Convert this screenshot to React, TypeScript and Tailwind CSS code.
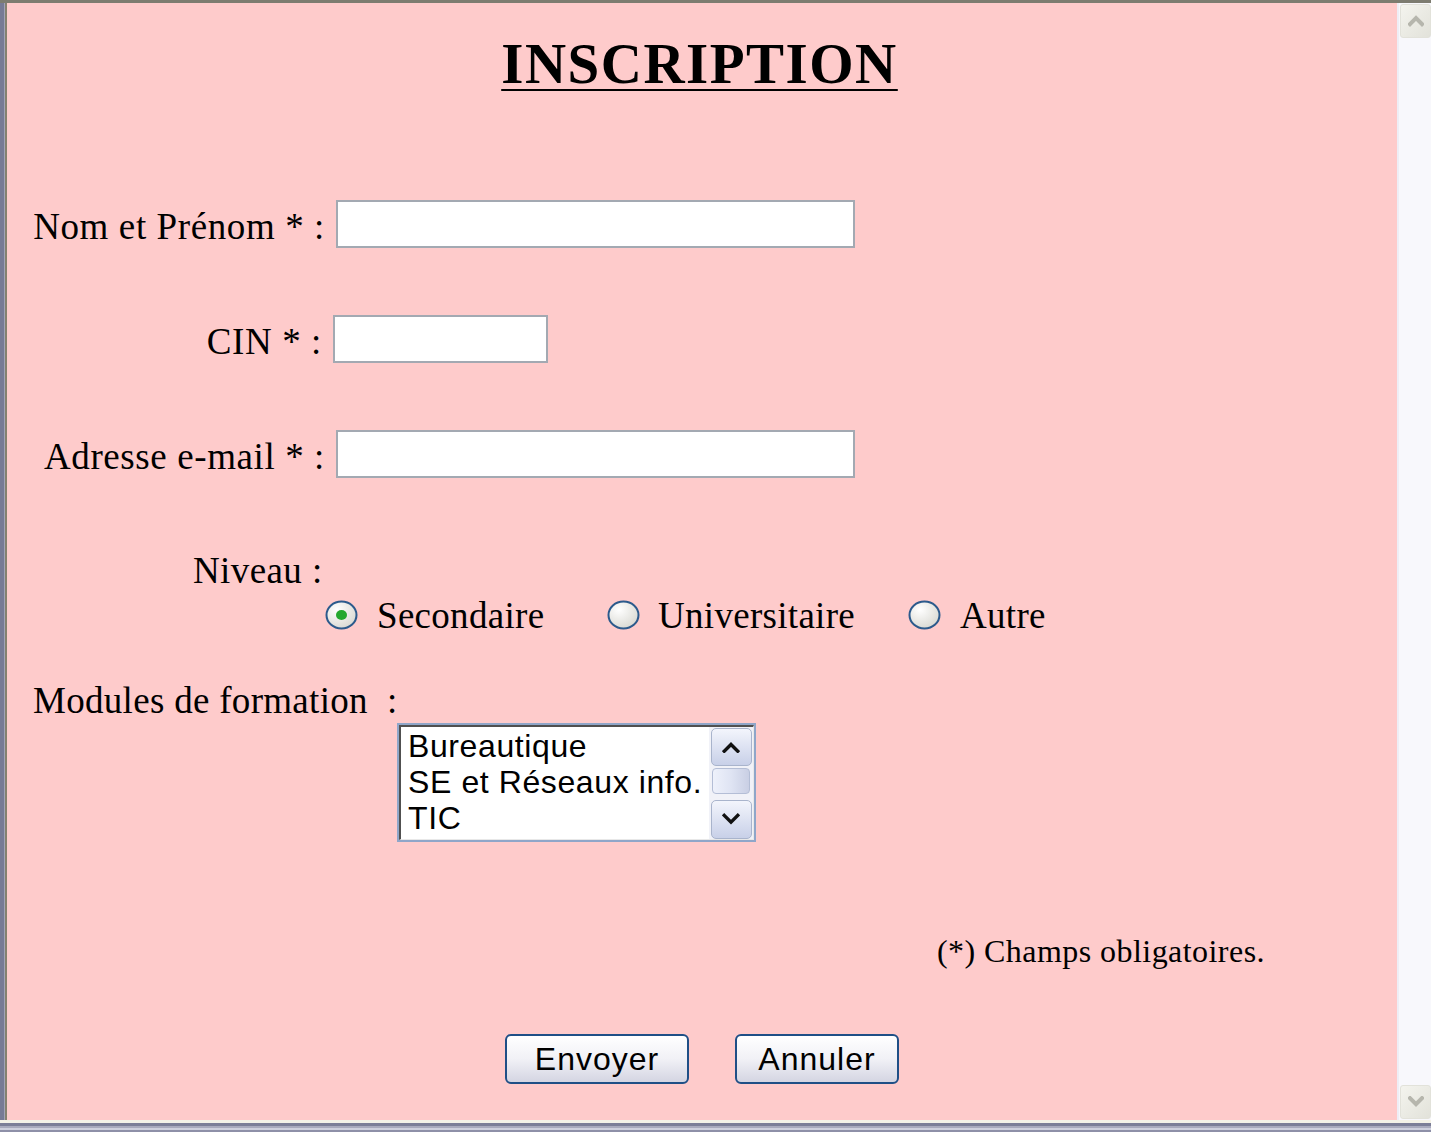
import React from "react";

const serif = { fontFamily: '"Liberation Serif", "Times New Roman", serif' };
const sans = { fontFamily: '"Liberation Sans", Arial, sans-serif' };

function Chevron({ up, color, size = 16, stroke = 3 }: { up?: boolean; color: string; size?: number; stroke?: number }) {
  return (
    <svg width={size} height={size * 0.7} viewBox="0 0 16 11" fill="none">
      <path
        d={up ? "M2 9 L8 3 L14 9" : "M2 2 L8 8 L14 2"}
        stroke={color}
        strokeWidth={stroke}
        strokeLinecap="square"
      />
    </svg>
  );
}

function Radio({ checked }: { checked?: boolean }) {
  return (
    <svg width="33" height="30" viewBox="0 0 33 30" className="shrink-0">
      <defs>
        <radialGradient id={checked ? "rg1" : "rg0"} cx="0.35" cy="0.3" r="0.8">
          <stop offset="0" stopColor="#ffffff" />
          <stop offset="1" stopColor="#d6d6cf" />
        </radialGradient>
      </defs>
      <ellipse cx="16.5" cy="15" rx="15" ry="13.5" fill={`url(#${checked ? "rg1" : "rg0"})`} stroke="#2c5a8c" strokeWidth="2" />
      {checked && <ellipse cx="16.5" cy="15" rx="5.5" ry="5" fill="#24a82e" />}
    </svg>
  );
}

function ListBox() {
  return (
    <div className="w-[359px] h-[119px] border-2 border-[#8fa6c9] bg-white">
      <div className="h-full flex border-t-2 border-l-2 border-[#505050] border-r border-b border-r-[#e8e8e8] border-b-[#e8e8e8]">
        <div className="flex-1 pl-[7px] pt-[1px] text-[32px] leading-[36px] tracking-[0.6px] text-black" style={sans}>
          <div>Bureautique</div>
          <div>SE et Réseaux info.</div>
          <div>TIC</div>
        </div>
        <div className="w-[44px] flex flex-col items-center pt-[1px] gap-[2px] bg-[#f1f2f8]">
          <div className="w-[41px] h-[38px] rounded-[5px] border border-[#a9b4cc] bg-gradient-to-b from-[#f3f5fc] to-[#c8d0e8] flex items-center justify-center">
            <Chevron up color="#111" size={18} />
          </div>
          <div className="w-[38px] h-[26px] rounded-[4px] border border-[#b4bed6] bg-gradient-to-r from-[#eef1fb] via-[#dfe4f3] to-[#c9cfe4]" />
          <div className="mt-[4px] w-[41px] h-[39px] rounded-[5px] border border-[#a9b4cc] bg-gradient-to-b from-[#f3f5fc] to-[#c8d0e8] flex items-center justify-center">
            <Chevron color="#111" size={18} />
          </div>
        </div>
      </div>
    </div>
  );
}

function Field({ label, labelW, inputW }: { label: string; labelW: number; inputW: string }) {
  return (
    <div className="flex items-start">
      <div
        className="text-right text-[37px] leading-none tracking-[0.6px] text-black mt-[8px] shrink-0"
        style={{ ...serif, width: labelW }}
      >
        {label}
      </div>
      <div className={`${inputW} h-[48px] ml-[11px] bg-white border-2 border-[#a3a9b2]`} />
    </div>
  );
}

export default function App() {
  return (
    <div className="w-[1431px] h-[1147px] bg-white flex flex-col overflow-hidden">
      <div className="h-[1120px] flex border-t-[3px] border-[#7d7c70]">
        {/* left window frame */}
        <div className="w-[4px] bg-[#777a95]" />
        <div className="w-[1px] bg-[#a2a3b8]" />
        <div className="w-[2px] bg-[#848170]" />

        <main className="w-[1390px] bg-[#fecbcb] flex flex-col text-black" style={serif}>
          <h1 className="mt-[32px] pr-[5px] text-center text-[57px] leading-none font-bold tracking-[1.5px] underline underline-offset-[6px] decoration-2">
            INSCRIPTION
          </h1>

          <div className="mt-[108px]">
            <Field label="Nom et Prénom * :" labelW={318} inputW="w-[519px]" />
          </div>
          <div className="mt-[67px]">
            <Field label="CIN * :" labelW={315} inputW="w-[215px]" />
          </div>
          <div className="mt-[67px]">
            <Field label="Adresse e-mail * :" labelW={318} inputW="w-[519px]" />
          </div>

          <div className="mt-[74px] ml-[186px] text-[37px] leading-none tracking-[0.4px]">Niveau :</div>

          <div className="mt-[10px] ml-[318px] h-[32px] flex items-center text-[37px] leading-none tracking-[0.3px]">
            <div className="w-[282px] flex items-center gap-[19px]">
              <Radio checked />
              <span>Secondaire</span>
            </div>
            <div className="w-[301px] flex items-center gap-[18px]">
              <Radio />
              <span>Universitaire</span>
            </div>
            <div className="flex items-center gap-[19px]">
              <Radio />
              <span>Autre</span>
            </div>
          </div>

          <div className="mt-[51px] ml-[26px] text-[37px] leading-none tracking-[0.3px]">Modules de formation&nbsp; :</div>

          <div className="mt-[4px] ml-[390px]">
            <ListBox />
          </div>

          <div className="mt-[93px] pr-[132px] flex justify-end text-[32px] leading-none tracking-[0.45px]">
            (*) Champs obligatoires.
          </div>

          <div className="mt-[67px] flex justify-center gap-[46px]">
            {["Envoyer", "Annuler"].map((t, i) => (
              <button
                key={t}
                className={`${i === 0 ? "w-[184px]" : "w-[164px]"} h-[50px] rounded-[6px] border-2 border-[#1f4f86] bg-gradient-to-b from-[#ffffff] via-[#f1f1f6] to-[#d4d5e2] text-[32px] leading-none tracking-[1px] text-black`}
                style={sans}
              >
                {t}
              </button>
            ))}
          </div>
        </main>

        {/* page scrollbar */}
        <div className="flex-1 flex flex-col bg-[#f8f8fc] border-l-2 border-[#eeeef6]">
          <div className="mt-[1px] ml-[1px] h-[34px] rounded-[3px] border border-[#e2e2da] bg-gradient-to-br from-[#f4f4ee] to-[#e2e2da] flex items-center justify-center">
            <Chevron up color="#b6b6ad" size={16} stroke={4} />
          </div>
          <div className="flex-1" />
          <div className="mb-[1px] ml-[1px] h-[34px] rounded-[3px] border border-[#e2e2da] bg-gradient-to-br from-[#f4f4ee] to-[#e2e2da] flex items-center justify-center">
            <Chevron color="#b6b6ad" size={16} stroke={4} />
          </div>
        </div>
      </div>

      {/* bottom window frame */}
      <div className="h-[3px] bg-[#f4f2e7]" />
      <div className="h-[3px] bg-[#7c7e97]" />
      <div className="h-[2px] bg-[#a9aabd]" />
      <div className="h-[2px] bg-[#cfd0dd]" />
      <div className="h-[2px] bg-[#8e90a8]" />
    </div>
  );
}
